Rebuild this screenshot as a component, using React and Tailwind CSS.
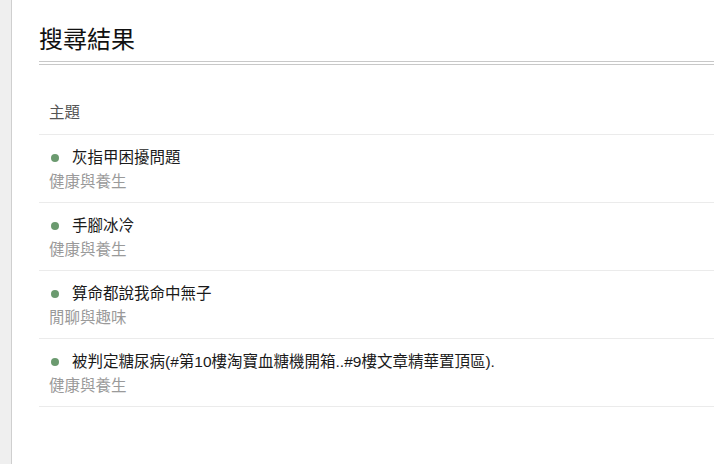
import React from "react";

const RESULTS = [
  { title: "灰指甲困擾問題", board: "健康與養生" },
  { title: "手腳冰冷", board: "健康與養生" },
  { title: "算命都說我命中無子", board: "閒聊與趣味" },
  { title: "被判定糖尿病(#第10樓淘寶血糖機開箱..#9樓文章精華置頂區).", board: "健康與養生" },
];

export default function App() {
  return (
    <div className="flex h-[464px] w-[714px] overflow-hidden bg-white font-['Liberation_Sans','Noto_Sans_CJK_TC',sans-serif]">
      {/* side strip */}
      <div className="w-[12px] flex-shrink-0 bg-[#efefef] border-r border-[#cfcfcf]" />

      <div className="flex-1 pl-[27px]">
        <h1 className="pt-[26px] mb-[7px] text-[24px] leading-[28px] text-[#111] font-['Liberation_Serif','Noto_Sans_CJK_TC',serif]">
          搜尋結果
        </h1>
        <div className="h-[4px] border-y border-[#c8c8c8]" />

        <div className="pt-[38px] pb-[11px] pl-[10px] text-[15.5px] leading-[20px] text-[#555] border-b border-[#ebebeb]">
          主題
        </div>

        {RESULTS.map((r, i) => (
          <div key={i} className="pt-[13px] pb-[10px] pl-[10px] border-b border-[#ebebeb]">
            <div className="flex items-center text-[15.5px] leading-[20px] text-[#1a1a1a]">
              <span className="ml-[2px] mr-[13px] w-[8px] h-[8px] rounded-full bg-[#6b9a6f] flex-shrink-0" />
              {r.title}
            </div>
            <div className="mt-[4px] text-[15.5px] leading-[20px] text-[#9a9a9a]">{r.board}</div>
          </div>
        ))}
      </div>
    </div>
  );
}
